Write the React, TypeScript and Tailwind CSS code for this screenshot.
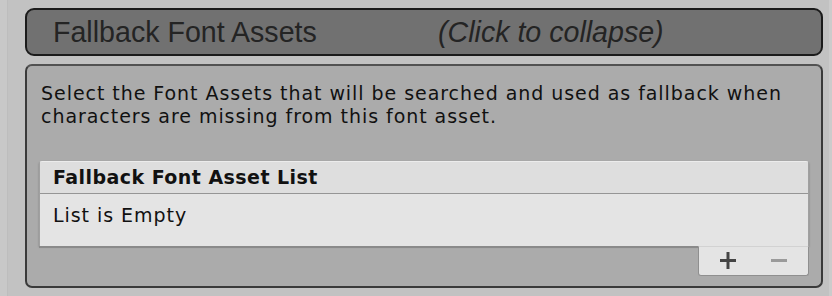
import React from 'react';

const body = { fontFamily: '"DejaVu Sans", "Noto Sans", sans-serif' };
const head = { fontFamily: '"Liberation Sans", Arial, sans-serif' };

export default function App() {
  return (
    <div className="w-[832px] h-[296px] flex bg-[#c2c2c2] overflow-hidden">
      {/* left gutter */}
      <div className="w-[8px] bg-[#c8c8c8] border-r border-[#bdbdbd]" />

      <div className="flex-1 pl-[17px] pr-[6px] pt-[8px] flex flex-col gap-[8px]">
        {/* Foldout header */}
        <div
          className="h-[48px] border-2 border-[#1b1b1b] rounded-[9px] bg-[#717171] flex items-center pl-[26px] text-[28.6px] text-[#242424]"
          style={head}
        >
          <span className="w-[385px]">Fallback Font Assets</span>
          <span className="italic">(Click to collapse)</span>
        </div>

        {/* Section body */}
        <div className="border-2 border-[#3a3a3a] border-t-[#525252] rounded-[7px] bg-[#ababab] pt-[16px] px-[12px] pb-[10px]">
          <p className="pl-[2px] text-[19px] leading-[23px] tracking-[0.95px] text-[#111111]" style={body}>
            Select the Font Assets that will be searched and used as fallback when characters are missing from this font asset.
          </p>

          <div className="mt-[33px]" style={body}>
            <div className="rounded-t-[3px] border-x border-t border-[#a0a0a0] border-t-[#ececec] shadow-[0_1px_2px_rgba(0,0,0,0.3)]">
              <div className="h-[32px] bg-[#dedede] border-b border-[#959595] flex items-center pl-[13px] text-[19px] font-bold tracking-[0.45px] text-[#111111]">
                Fallback Font Asset List
              </div>
              <div className="h-[52px] bg-[#e4e4e4] pl-[13px] pt-[10px] text-[19px] leading-[23px] tracking-[0.95px] text-[#111111]">
                List is Empty
              </div>
            </div>

            <div className="flex items-start">
              <div className="flex-1 h-[2px] bg-[#8a8a8a]" />
              <div className="w-[111px] h-[30px] bg-[#e4e4e4] border-t border-t-[#d2d2d2] border-x border-b border-[#8f8f8f] rounded-b-[3px] flex items-center justify-around pb-[1px]">
                <svg width="16" height="17" viewBox="0 0 16 17" className="ml-[4px]">
                  <rect x="6.5" y="0" width="3" height="17" fill="#444444" />
                  <rect x="0" y="7" width="16" height="3" fill="#444444" />
                </svg>
                <svg width="16" height="3" viewBox="0 0 16 3" className="mr-[4px]">
                  <rect x="0" y="0" width="16" height="3" fill="#9a9a9a" />
                </svg>
              </div>
            </div>
          </div>
        </div>
      </div>

      {/* right gutter */}
      <div className="w-[3px] bg-[#cbcbcb]" />
    </div>
  );
}
